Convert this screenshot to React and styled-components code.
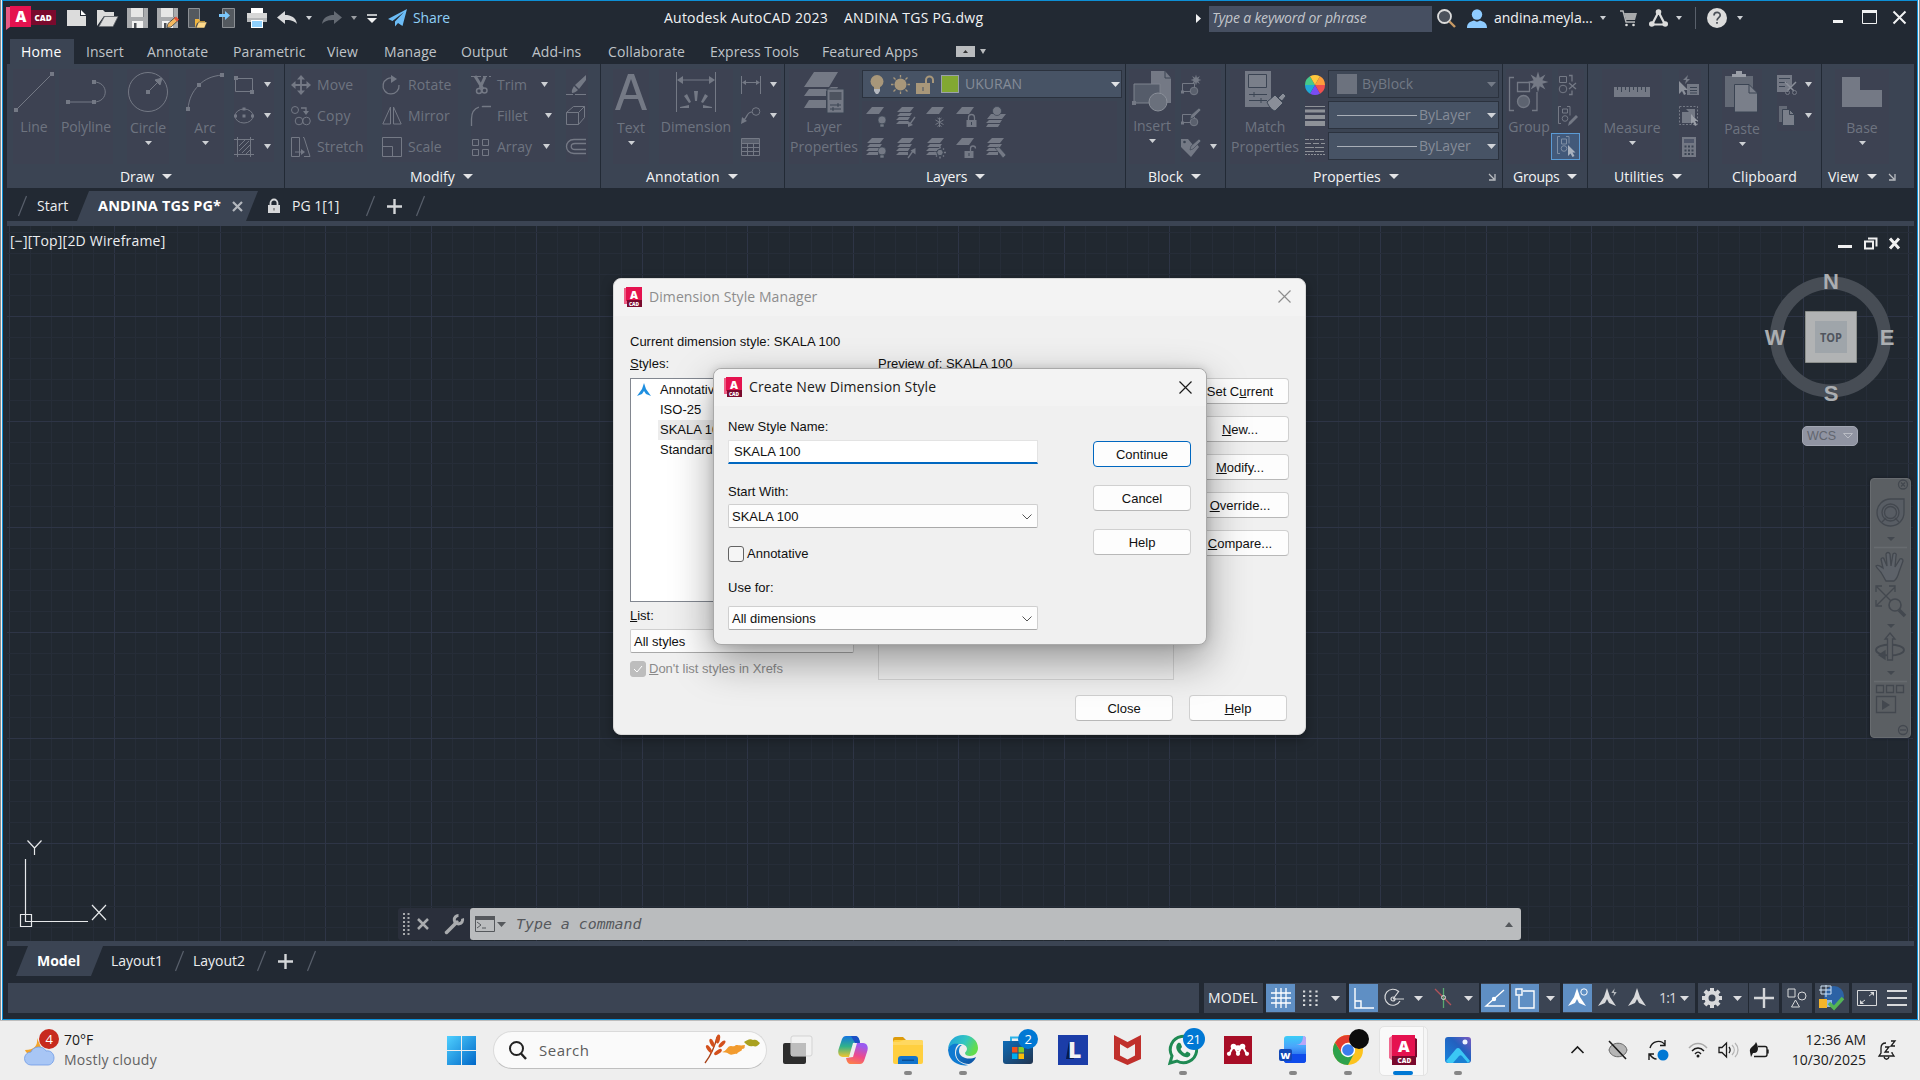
import React from "react";
import styled, { createGlobalStyle, css } from "styled-components";

const UI = `"Open Sans", "Noto Sans", sans-serif`;
const ARIAL = `"Liberation Sans", Arial, sans-serif`;
const c = {
  frame: "#222933",
  panel: "#3b4453",
  canvas: "#212830",
  blue: "#0d8fd6",
  dim: "#6e7480",
  icon: "#747985",
  light: "#d8d9db",
  active: "#5f8fc4",
};

const Global = createGlobalStyle`
  * { box-sizing: border-box; }
  body { margin: 0; width: 1920px; height: 1080px; overflow: hidden; background: ${c.frame}; font: 14px/20px ${UI}; }
  svg { display: block; flex: none; overflow: visible; }
`;

const Svg = ({ w, h, sw = 1, color, children }) => (
  <svg width={w} height={h} viewBox={`0 0 ${w} ${h}`} fill="none" stroke="currentColor" strokeWidth={sw} color={color}>
    {children}
  </svg>
);

/* ---------- primitives ---------- */
const Shell = styled.div`
  width: 1920px; height: 1020px; padding: 0 1px; background: #f0f2f4;
  border-left: 1px solid #85898d; border-right: 1px solid #85898d;
`;
const Frame = styled.div`
  height: 1020px; border: 1px solid ${c.blue}; background: ${c.frame};
  display: flex; flex-direction: column;
`;
const Slot = styled.div`
  flex: none; display: flex; align-items: center; white-space: nowrap;
  margin-left: ${(p) => p.$l || 0}px; width: ${(p) => (p.$w ? p.$w + "px" : "auto")};
`;
const Txt = styled.span`
  flex: none; white-space: pre; letter-spacing: ${(p) => p.$ls || 0}px;
  color: ${(p) => p.$c || "inherit"}; font-size: ${(p) => p.$s || 14}px;
  font-weight: ${(p) => (p.$b ? 700 : 400)};
  width: ${(p) => (p.$w ? p.$w + "px" : "auto")}; margin-left: ${(p) => p.$l || 0}px;
`;
const Caret = ({ w = 8, h = 5, color = "#cdd0d4" }) => (
  <Svg w={w} h={h} color={color}><path d={`M0 0H${w}L${w / 2} ${h}Z`} fill="currentColor" stroke="none" /></Svg>
);

/* ---------- title bar ---------- */
const TitleBar = styled.div`
  height: 38px; padding: 0 0 4px 3px; display: flex; align-items: center; color: #f1f2f3;
  & span { position: relative; top: -0.5px; }
`;
const SearchBox = styled.div`
  width: 223px; height: 26px; margin-left: 7px; padding-left: 3px; background: #464f61;
  color: #c3c6cb; font-style: italic; display: flex; align-items: center; flex: none; margin-top: 1px;
`;
const Sep = styled.div`width: 1px; height: 22px; margin-left: 13px; background: #59606b;`;

const Logo = () => (
  <Svg w={50} h={24}>
    <g stroke="none">
      <path d="M0 1h8v17l-8 6z" fill="#e85a84" />
      <path d="M25 4h25v15H25z" fill="#7a0a2d" />
      <path d="M4 0h21v21H4z" fill="#e5124f" />
      <text x="9.5" y="16" fontFamily={UI} fontWeight="800" fontSize="15" fill="#fff">A</text>
      <text x="28.5" y="15" fontFamily={UI} fontWeight="800" fontSize="8.2" fill="#fff">CAD</text>
    </g>
  </Svg>
);
const F = "#dcdcdc";
const NewIco = () => <Svg w={22} h={18}><path d="M1 1h13v6h6v10H1z" fill={F} stroke="none" /><path d="M15 1l5 5h-5z" fill="#fff" stroke="none" /></Svg>;
const OpenIco = () => <Svg w={21} h={18}><path d="M0 17V1h6l2 2h9v4H7z" fill={F} stroke="none" /><path d="M2 17.500L7.500 7.500H21L16 17.500z" fill={F} stroke="#6b6e73" strokeWidth=".8" /></Svg>;
const Disk = () => (<g stroke="none"><path d="M0 0h4v9h13V0h4v20H0z" fill="#a9abae" /><path d="M4 0h12.500v9H4z" fill="#e6e6e6" /><path d="M5 13h11v7H5z" fill="#f2f2f2" /><path d="M7 15h2.500v5H7z" fill="#4c5056" /></g>);
const SaveIco = () => <Svg w={20} h={20}><Disk /></Svg>;
const SaveAsIco = () => <Svg w={20} h={20}><Disk /><path d="M10 19.500l1-4 7-6 3 3-7 6.500z" fill="#f4b860" stroke="#222933" strokeWidth=".7" /><path d="M17 10.500l2-2 3 3-2 2z" fill="#e8543a" stroke="none" /></Svg>;
const MobOpen = () => <Svg w={18} h={20}><path d="M.5.500h11v19H.5z" fill="#54595f" stroke="#8b8f94" /><path d="M7 20v-9h4l1 2h5v2H9z" fill="#f0b53f" stroke="none" /><path d="M8 20l2.500-6H19l-2.500 6z" fill="#ffd98a" stroke="#222933" strokeWidth=".5" /></Svg>;
const MobSave = () => <Svg w={16} h={20}><path d="M3.500.500h12v19h-12z" fill="#54595f" stroke="#8b8f94" /><path d="M0 6h6V3l5 4.500-5 4.500V9H0z" fill="#7cc7fb" stroke="none" /></Svg>;
const Printer = () => <Svg w={20} h={20}><g stroke="none"><path d="M4 0h12v5H4z" fill="#fff" /><path d="M0 5h20v9H0z" fill="#d7d7d7" /><path d="M0 10h20v4H0z" fill="#b5b7b9" /><path d="M4 12h12v8H4z" fill="#fff" /><path d="M5 13h10v6H5z" fill="#8ed0fc" /></g></Svg>;
const Undo = ({ dim }) => (
  <Svg w={20} h={14} color={dim ? "#646a73" : "#d8d9db"}>
    <path transform={dim ? "matrix(-1 0 0 1 20 0)" : undefined} d="M8 0v4c6 0 11 2.500 12 9-3-3.500-7-4-12-4v4L0 6.500z" fill="currentColor" stroke="none" />
  </Svg>
);
const Plane = () => <Svg w={19} h={18}><path d="M19 0L0 10l4.500 2L16 3 7 12.500v5l3-3.500 4.500 3z" fill="#6cbcf6" stroke="none" /></Svg>;
const Lens = () => <Svg w={19} h={19}><circle cx="7.500" cy="7.500" r="6.500" fill="#4c525c" stroke="#dcdcdc" strokeWidth="1.800" /><path d="M12.500 12.500l5.500 5.500" stroke="#c79a64" strokeWidth="2.400" /></Svg>;
const User = () => <Svg w={20} h={19}><g fill="#8ecbff" stroke="none"><circle cx="10" cy="5.500" r="5.200" /><path d="M0 19c0-5 3-6.500 7-7.500 2 1.500 4 1.500 6 0 4 1 7 2.500 7 7.500z" /></g></Svg>;
const Cart = () => <Svg w={17} h={17}><path d="M0 1h3l3 11h9" stroke="#b5b7b9" strokeWidth="1.400" /><path d="M4 3h13l-2 7H6z" fill="#a7a9ab" stroke="none" /><circle cx="6.500" cy="15" r="1.300" fill={F} stroke="none" /><circle cx="13.500" cy="15" r="1.300" fill={F} stroke="none" /></Svg>;
const AppTri = () => <Svg w={19} h={18}><path d="M9.500 3L3 15.500h13z" stroke={F} strokeWidth="2.200" /><g fill={F} stroke="none"><circle cx="9.500" cy="3" r="2.800" /><circle cx="2.800" cy="15" r="2.800" /><circle cx="16.200" cy="15" r="2.800" /></g></Svg>;
const Help = () => <Svg w={20} h={20}><circle cx="10" cy="10" r="10" fill="#dcdcdc" stroke="none" /><path d="M7 7.500c0-4 6.200-4 6.200-.3 0 2.300-3.200 2.600-3.200 5.300M10 14v1.800" stroke="#4a4f57" strokeWidth="1.700" /></Svg>;

const Title = () => (
  <TitleBar>
    <Slot $w={50}><Logo /></Slot>
    <Slot $l={10} $w={22}><NewIco /></Slot>
    <Slot $l={9} $w={21}><OpenIco /></Slot>
    <Slot $l={9} $w={20}><SaveIco /></Slot>
    <Slot $l={10} $w={20}><SaveAsIco /></Slot>
    <Slot $l={11} $w={18}><MobOpen /></Slot>
    <Slot $l={13} $w={16}><MobSave /></Slot>
    <Slot $l={12} $w={20}><Printer /></Slot>
    <Slot $l={10} $w={20}><Undo /></Slot>
    <Slot $l={9} $w={6}><Caret w={6} h={4} /></Slot>
    <Slot $l={10} $w={20}><Undo dim /></Slot>
    <Slot $l={9} $w={6}><Caret w={6} h={4} color="#9a9da2" /></Slot>
    <Slot $l={10} $w={10}><Svg w={10} h={9}><path d="M0 1h10" strokeWidth="1.500" /><path d="M0 4h10L5 9z" fill="currentColor" stroke="none" /></Svg></Slot>
    <Slot $l={11} $w={19}><Plane /></Slot>
    <Slot $l={6} $w={251}><Txt $c="#8fd0f8" $ls={-0.1}>Share</Txt></Slot>
    <Slot $w={165}><Txt $ls={0.22}>Autodesk AutoCAD 2023</Txt></Slot>
    <Slot $l={15} $w={150}><Txt $ls={0.25}>ANDINA TGS PG.dwg</Txt></Slot>
    <Slot $l={202} $w={6}><Svg w={5} h={9}><path d="M0 0l5 4.500L0 9z" fill="currentColor" stroke="none" /></Svg></Slot>
    <SearchBox><Txt $ls={-0.18}>Type a keyword or phrase</Txt></SearchBox>
    <Slot $l={5} $w={19}><Lens /></Slot>
    <Slot $l={11} $w={20}><User /></Slot>
    <Slot $l={7} $w={100}><Txt>andina.meyla...</Txt></Slot>
    <Slot $l={6} $w={6}><Caret w={6} h={4} /></Slot>
    <Slot $l={14} $w={17}><Cart /></Slot>
    <Slot $l={12} $w={19}><AppTri /></Slot>
    <Slot $l={8} $w={6}><Caret w={6} h={4} /></Slot>
    <Sep />
    <Slot $l={11} $w={20}><Help /></Slot>
    <Slot $l={10} $w={6}><Caret w={6} h={4} /></Slot>
    <Slot $l={90} $w={10}><Svg w={10} h={10}><path d="M0 8.500h10" strokeWidth="3" /></Svg></Slot>
    <Slot $l={19} $w={15}><Svg w={15} h={16}><path d="M.5 1v12.500h14V1" /><path d="M0 1.500h15" strokeWidth="3" /></Svg></Slot>
    <Slot $l={16} $w={13}><Svg w={13} h={14} sw={2}><path d="M.5.500l12 12M12.500.500l-12 12" /></Svg></Slot>
  </TitleBar>
);

/* ---------- ribbon tabs ---------- */
const TabRow = styled.div`height: 25px; display: flex; align-items: center; padding-left: 7px;`;
const Tab = styled.div`
  width: ${(p) => p.$w}px; height: 25px; padding: 3px 0 0 ${(p) => (p.$on ? 11 : 0)}px; flex: none; white-space: nowrap;
  margin-right: ${(p) => (p.$on ? 12 : 0)}px; background: ${(p) => (p.$on ? c.panel : "none")}; color: ${(p) => (p.$on ? "#fff" : "#bfc3c8")};
  letter-spacing: ${(p) => p.$ls || 0}px;
`;
const TABS = [["Home", 64, 0.3], ["Insert", 61, 0], ["Annotate", 86, 0.15], ["Parametric", 94, 0.1], ["View", 57, 0.1], ["Manage", 77, 0.1], ["Output", 71, 0], ["Add-ins", 76, 0], ["Collaborate", 102, 0.15], ["Express Tools", 112, 0], ["Featured Apps", 134, 0.08]];

/* ---------- ribbon ---------- */
const Ribbon = styled.div`height: 124px; margin: 0 3px 0 4px; background: ${c.panel}; display: flex;`;
const Panel = styled.section`
  width: ${(p) => p.$w}px; flex: none; display: flex; flex-direction: column;
  border-right: ${(p) => (p.$last ? 0 : 1)}px solid #222a35; color: ${c.dim};
`;
const Body = styled.div`height: 102px; display: flex; padding-top: 5px;`;
const Foot = styled.div`
  height: 22px; display: flex; align-items: center; color: #f3f4f5; padding-left: ${(p) => p.$l}px; gap: 8px; padding-bottom: 1px; white-space: nowrap;
`;
const Big = styled.div`
  width: ${(p) => p.$w}px; margin-left: ${(p) => p.$l || 0}px; flex: none; height: 95px;
  display: flex; flex-direction: column; align-items: center; background: #3d4252;
`;
const BigIcon = styled.div`height: 46px; display: flex; align-items: center; color: ${c.icon};`;
const BigLabel = styled.div`
  line-height: 20px; white-space: nowrap; text-align: center; margin-bottom: 3px; margin-top: ${(p) => p.$t || 2}px;
  letter-spacing: ${(p) => p.$ls || 0}px;
`;
const Col = styled.div`width: ${(p) => p.$w}px; margin-left: ${(p) => p.$l || 0}px; flex: none; display: flex; flex-direction: column; padding-top: ${(p) => p.$t || 0}px;`;
const Row = styled.div`height: 31px; display: flex; align-items: center; white-space: nowrap; background: #3d4252; color: ${c.dim};`;
const IconCell = styled.div`width: 20px; flex: none; color: ${c.icon}; display: flex;`;

const Panels = ({ title, foot, w, last, launcher, noCaret, ls, children }) => (
  <Panel $w={w} $last={last}>
    <Body>{children}</Body>
    <Foot $l={foot}>
      <Txt $ls={ls}>{title}</Txt>
      {!noCaret && <Caret w={10} h={5} color="#e3e4e6" />}
      {launcher !== undefined && <Slot $l={launcher}><Svg w={8} h={8} color="#b9bcc1"><path d="M1 1l5 5M7 1v6H1" strokeWidth="1.300" /></Svg></Slot>}
    </Foot>
  </Panel>
);
const BigBtn = ({ w, l, icon, label, caret, t, ls }) => (
  <Big $w={w} $l={l}><BigIcon>{icon}</BigIcon><BigLabel $t={t} $ls={ls}>{label}</BigLabel>{caret && <Caret w={7} h={4} />}</Big>
);
const Sm = ({ icon, text, tw, caretAt, ls }) => (
  <Row>
    <IconCell>{icon}</IconCell>
    {text && <Txt $l={6} $w={tw} $ls={ls}>{text}</Txt>}
    {caretAt !== undefined && <Slot $l={caretAt}><Caret w={7} h={5} /></Slot>}
  </Row>
);
const sq = (x, y, s = 4) => <rect x={x - s / 2} y={y - s / 2} width={s} height={s} fill="currentColor" stroke="none" />;

const LineI = <Svg w={40} h={40}>{sq(2, 38)}{sq(38, 2)}<path d="M2 38L38 2" /></Svg>;
const PolyI = <Svg w={40} h={24}>{sq(2, 22)}{sq(28, 22)}{sq(28, 2)}<path d="M2 22h26c15 0 15-20 0-20" /></Svg>;
const CircI = <Svg w={40} h={40}><circle cx="20" cy="20" r="19.500" />{sq(20, 20)}<path d="M20 20L32 8" /><path d="M34 6l-7 2 5 5z" fill="currentColor" /></Svg>;
const ArcI = <Svg w={38} h={38}>{sq(2, 36)}{sq(13, 12)}{sq(36, 2)}<path d="M2 36C3 26 6 19 13 12 19 6 26 3 36 2" /></Svg>;
const RectI = <Svg w={20} h={18}><path d="M1.500 2.500h17v13h-17z" />{sq(2, 2)}{sq(18, 16)}</Svg>;
const EllI = <Svg w={20} h={18}><ellipse cx="10" cy="9" rx="9" ry="7" />{sq(10, 9, 3)}{sq(1.500, 9, 3)}{sq(10, 2, 3)}{sq(18.500, 9, 3)}</Svg>;
const HatI = <Svg w={20} h={20}><path d="M0 2.500h20M0 17.500h20M3.500 0v20M16.500 0v20M5 9l6-6M5 14L15 4M8 16l8-8M12 17l4-4" /></Svg>;
const MoveI = <Svg w={20} h={20}><path d="M10 2v16M2 10h16" strokeWidth="1.800" /><g fill="currentColor" stroke="none"><path d="M10 0l4 4.500H6zM10 20l4-4.500H6zM0 10l4.500-4v8zM20 10l-4.500-4v8z" /></g></Svg>;
const CopyI = <Svg w={20} h={20}><circle cx="4" cy="4" r="3.500" /><path d="M10 2h5v4" strokeWidth="1.300" /><path d="M12 5h6l-3 4z" fill="currentColor" stroke="none" /><circle cx="8" cy="15" r="3.800" /><circle cx="15.500" cy="15" r="3.800" /></Svg>;
const StretchI = <Svg w={20} h={20}><path d="M.5.500h8v19h-8zM12 .5h1l6 19h-6M4 15h8" /><path d="M10 12l4 3-4 3z" fill="currentColor" stroke="none" /></Svg>;
const RotI = <Svg w={20} h={20}><path d="M12 3.500A8 8 0 1 0 17 10" strokeWidth="1.300" /><path d="M9 0l6 4-6 4z" fill="currentColor" stroke="none" /></Svg>;
const MirI = <Svg w={20} h={20}><path d="M8.500 1v17H.8zM11.500 1v17h7.700z" /></Svg>;
const ScaleI = <Svg w={20} h={20}><path d="M.5.500h19v19H.5zM.5 9.500h10v10" /></Svg>;
const TrimI = <Svg w={20} h={20}><path d="M0 1.500h20" strokeDasharray="4 2" /><path d="M4 1l8 13M14 2l-5 11" strokeWidth="3" /><circle cx="8" cy="16" r="2.500" strokeWidth="1.500" /><circle cx="13.500" cy="15.500" r="2.500" strokeWidth="1.500" /></Svg>;
const FillI = <Svg w={20} h={20}><path d="M.5 20v-7C.5 5 5 .5 12 .5h8" strokeWidth="1.300" strokeDasharray="22 3" /></Svg>;
const ArrI = <Svg w={18} h={18}><path d="M1.500 1.500h6v6h-6zM11.500 1.500h6v6h-6zM1.500 11.500h6v6h-6zM11.500 11.500h6v6h-6z" /></Svg>;
const EraI = <Svg w={20} h={20}><path d="M20 0L9 10l4 4 7-9zM8 11l4 4c-2 2-4 3-6 3 0-2-1-2 2-7z" fill="currentColor" stroke="none" /><path d="M0 19.500h7M9 19.500h11" /></Svg>;
const ExpI = <Svg w={20} h={20}><path d="M.5 6.500h12v12H.5zM.5 6.500l7-6h11l-6 6M18.500.500v11l-6 7M12.500 6.500l6-6" /></Svg>;
const OffI = <Svg w={20} h={16}><path d="M20 .5H8c-10 0-10 14 0 14h12M20 4.500H9c-5 0-5 6 0 6h11" strokeWidth="1.300" /></Svg>;
const TextI = <Svg w={32} h={36}><path d="M0 36L13 0h6l13 36h-5l-4-11H9L5 36zM10.500 21h11L16 5z" fill="currentColor" stroke="none" /></Svg>;
const DimI = <Svg w={40} h={40}><path d="M.5 0v40M39.500 0v40M2 8h36" /><g fill="currentColor" stroke="none"><path d="M1 8l6-4v8zM39 8l-6-4v8zM18 19h4l-1 10h-2zM8 24l3-2 4 8-2 1zM32 24l-3-2-4 8 2 1zM4 35l9-2v3H4zM36 35l-9-2v3h9z" /></g></Svg>;
const LinI = <Svg w={20} h={18}><path d="M.5 0v18M19.500 0v18M2 6.500h16" /><path d="M1 6.500l4-2.500v5zM19 6.500l-4-2.500v5z" fill="currentColor" stroke="none" /></Svg>;
const LeadI = <Svg w={20} h={18}><circle cx="15" cy="4.500" r="3.800" /><path d="M11 5c-5 0-4 4-8 8" strokeWidth="1.200" /><path d="M0 17l1-7 5 4z" fill="currentColor" stroke="none" /></Svg>;
const TabI = <Svg w={20} h={18}><path d="M.5.500h18v17H.5zM.5 5.500h18M.5 9.500h18M.5 13.500h18M6.500 5v12M12.500 5v12" /><path d="M1 1h17v4H1z" fill="currentColor" stroke="none" opacity=".5" /></Svg>;
const LayerI = (
  <Svg w={40} h={42}><g fill="currentColor" stroke="none">
    <path d="M10 1h24l-9 15H0zM27 16h7l-2 4H22v5H0l5-7h19zM0 37l5-8h17v8z" />
    <path d="M23 18h17v24H23z" stroke={c.panel} /><path d="M25.500 21h12v8h-12z" fill="#4d535f" /></g>
    <path d="M26 34h11M26 38h11M34 32v4M29 36v4" stroke={c.panel} />
  </Svg>
);
const Stack = ({ n = 4, children }) => (
  <Svg w={20} h={20}><g fill="currentColor" stroke="none">
    {n === 1 ? <path d="M6 0h12l-5 7H0z" /> : <path d="M6 0h12l-4 5H1zM4 6h12l-2 3H1zM3 10h11l-2 3H0zM3 14h9v3H0z" />}
  </g>{children}</Svg>
);
const bulb = <g stroke={c.panel} strokeWidth=".6" fill="currentColor"><circle cx="16" cy="13" r="4" /><path d="M14 17h4v3h-4z" /></g>;
const flake = <path d="M13.500 10.500v9.500M9.500 13l8 4.500M17.500 13l-8 4.500M11.500 11l2 1.500 2-1.500M11.500 19.500l2-1.500 2 1.500" strokeWidth="1" />;
const lockB = <g><path d="M12.500 13v-2.500a3 3 0 0 1 6 0V13" strokeWidth="1.300" /><path d="M10.500 13h10v7h-10z" fill="currentColor" stroke="none" /><path d="M15.500 15v3" stroke={c.panel} /></g>;
const lockO = <g><path d="M14.500 13v-2.500a2.500 2.500 0 0 1 5 0" strokeWidth="1.300" /><path d="M8.500 13h9v7h-9z" fill="currentColor" stroke="none" /><path d="M13 15v3" stroke={c.panel} /></g>;
const sunB = <g><circle cx="14" cy="14.500" r="3.200" fill="currentColor" stroke={c.panel} /><path d="M14 8.500v2M14 18.500v2M8 14.500h2M18 14.500h2M10 10.500l1 1M17 17.500l1 1M18 10.500l-1 1M11 17.500l-1 1" strokeWidth="1.500" /></g>;
const arrD = <g><path d="M19 10l-5 7" strokeWidth="1.300" /><path d="M12 20v-6l5 4z" fill="currentColor" stroke="none" /></g>;
const arrU = <g><path d="M12 20l5-7" strokeWidth="1.300" /><path d="M19.500 10v6.500l-5-4z" fill="currentColor" stroke="none" /></g>;
const hd = <g fill="currentColor" stroke={c.panel} strokeWidth=".7"><circle cx="11" cy="4" r="4.500" /></g>;
const erB = <path d="M9 10l4-1 7 8-3 3z" fill="currentColor" stroke={c.panel} strokeWidth=".6" />;

const LAYERS_A = [<Stack n={1}>{bulb}</Stack>, <Stack>{arrD}</Stack>, <Stack n={1}>{flake}</Stack>, <Stack n={1}>{lockB}</Stack>, <Svg w={20} h={20}><path d="M5 7h15l-4 5H1zM3 13h13l-2 3H0zM2 17h12l-2 3H0z" fill="currentColor" stroke="none" />{hd}</Svg>];
const LAYERS_B = [<Stack>{bulb}</Stack>, <Stack>{arrU}</Stack>, <Stack>{sunB}</Stack>, <Stack n={1}>{lockO}</Stack>, <Stack>{erB}</Stack>];

const InsertI = <Svg w={40} h={42}><path d="M19 0h14l6 7v25H19z" fill="#747985" stroke="none" /><path d="M33 0v7h6" stroke={c.panel} /><path d="M2 13h26v19H2z" fill="#555c6a" stroke="#7e838e" /><circle cx="26" cy="31" r="9" fill="#6a707c" stroke="#8a8f99" />{sq(2, 32)}</Svg>;
const blk = <g><path d="M1.500 8.500h12v8h-12z" /><circle cx="13" cy="16" r="3.800" fill="#5a606d" />{sq(1.500, 17, 3)}</g>;
const star = (x, y, r) => {
  const pts = Array.from({ length: 16 }, (_, i) => { const a = (i * Math.PI) / 8, q = i % 2 ? r * 0.45 : r; return `${x + q * Math.sin(a)},${y - q * Math.cos(a)}`; }).join(" ");
  return <polygon points={pts} fill="currentColor" stroke="none" />;
};
const pen = <path d="M9 13l1-4 8-7 2 2-8 8z" fill="currentColor" stroke={c.panel} strokeWidth=".6" />;
const BlkNew = <Svg w={20} h={20}>{blk}{star(15, 5, 5.500)}</Svg>;
const BlkEd = <Svg w={20} h={20}>{blk}{pen}</Svg>;
const TagI = <Svg w={20} h={20}><path d="M0 2h7l5 6 3-2 3 4-8 10L0 10z" fill="currentColor" stroke="none" /><circle cx="3.500" cy="5" r="1.300" fill={c.panel} stroke="none" />{pen}</Svg>;
const MatchI = <Svg w={40} h={42}><path d="M0 0h26v36H0z" fill="currentColor" stroke="none" /><path d="M3.500 3.500h18v13h-18z" stroke={c.panel} fill="#7a7f8a" /><path d="M4 23.500h18M4 29.500h18M9 21v5M16 27v5" stroke={c.panel} /><path d="M22 31l8-7 8 8-8 8c-3-1-6-4-8-9zM33 27l5-5 3 3-4 5z" fill="#8a8e98" stroke={c.panel} /></Svg>;
const wheelCols = ["#ff9d3c", "#f0504f", "#7a4df3", "#1fa9d6", "#46c98a", "#ffc83d"];
const Wheel = <Svg w={20} h={20}>{wheelCols.map((f, i) => { const a = (i * Math.PI) / 3 + 0.52, b = a + Math.PI / 3; return <path key={f} d={`M10 10L${10 + 10 * Math.sin(a)} ${10 - 10 * Math.cos(a)}A10 10 0 0 1 ${10 + 10 * Math.sin(b)} ${10 - 10 * Math.cos(b)}Z`} fill={f} stroke="none" />; })}</Svg>;
const Weights = <Svg w={20} h={20} color="#8e9298"><path d="M0 .5h20" /><path d="M0 5h20" strokeWidth="3" /><path d="M0 11h20" strokeWidth="4" /><path d="M0 17.500h20" strokeWidth="5" /></Svg>;
const Types = <Svg w={20} h={16} color="#8e9298"><path d="M0 .5h20" strokeDasharray="4 1" /><path d="M0 4.500h20" strokeDasharray="6 2" /><path d="M0 8.500h20M0 12.500h20" strokeDasharray="9 1" /><path d="M0 15.500h20" strokeDasharray="2 1" /></Svg>;
const GroupI = <Svg w={40} h={40}><path d="M5 5.500H.5v33H5M23 38.500h5V20M8.500 10.500h12v9h-12z" strokeWidth="1.300" /><circle cx="14.500" cy="29.500" r="6" fill="#5d6370" strokeWidth="1.300" />{star(29, 10, 10.500)}</Svg>;
const gset = <g><path d="M1.500 1.500h7v6h-7z" /><circle cx="5" cy="14" r="3.800" /></g>;
const Ungroup = <Svg w={20} h={20}>{gset}<path d="M11 .5h3v6M11 19.500h3v-4M11 8l7 6M18 8l-7 6" strokeWidth="1.300" /></Svg>;
const GrEdit = <Svg w={20} h={20}><path d="M3 .5H.5v17H3M9 .5h3v9M4.500 3h5v4h-5z" /><circle cx="7" cy="12.500" r="2.800" /><path d="M10 20l1-4 7-7 2 2-7 7z" fill="currentColor" stroke="none" /></Svg>;
const GrSel = <Svg w={20} h={20}><path d="M4 .5H1.500v17H4M10 .5h3v7M5.500 3h5v5h-5z" /><circle cx="8" cy="12.500" r="2.800" /><path d="M12 9v11l2.500-2.500 2 3.500 2-1-2-3.500h3z" fill="#a9b2bf" stroke="none" /></Svg>;
const Ruler = <Svg w={36} h={10}><path d="M0 0h36v10H0z" fill="currentColor" stroke="none" /><path d="M3.500 0v3M7.500 0v5M11.500 0v3M15.500 0v5M19.500 0v3M23.500 0v5M27.500 0v3M31.500 0v5" stroke={c.panel} /></Svg>;
const QSel = <Svg w={20} h={20}><path d="M8 9h12v11H8z" fill="currentColor" stroke="none" /><path d="M11 12.500h7M11 15.500h7M11 18h7" stroke={c.panel} /><path d="M0 6v13l3-3 2 4 2-1-2-4h4z" fill="#8b909a" stroke="none" /><path d="M9 0L4 5h3l-1 4 5-5H8z" fill="currentColor" stroke="none" /></Svg>;
const SelAll = <Svg w={20} h={20}><path d="M.5.500h18v18H.5z" strokeDasharray="2 1.500" /><path d="M3 6h11v11H3zM7 3h9v9" fill="currentColor" stroke="none" /><path d="M12 8v10l2-2 2 4 2-1-2-4h3z" fill="#9a9ea7" stroke="none" /></Svg>;
const Calc = <Svg w={20} h={20}><path d="M3 0h14v20H3z" fill="currentColor" stroke="none" /><path d="M5 2h10v4H5z" fill="#50576a" stroke="none" /><path d="M5.500 9.500h9M5.500 13.500h9M5.500 17h9" strokeDasharray="2 1.500" strokeWidth="2" stroke={c.panel} /></Svg>;
const PasteI = <Svg w={34} h={42}><path d="M0 5h28v31H0z" fill="#646a76" stroke="none" /><path d="M7 6V3h4V0h6v3h4v3z" fill="#9a9ea7" stroke="none" /><path d="M9.500 13.500H24l8.500 8.500v19h-23z" fill="#7a7f8a" stroke={c.panel} /><path d="M24 13.500V22h8.500" stroke={c.panel} /></Svg>;
const CutI = <Svg w={20} h={20}><path d="M0 0h15v10l-4 7H0z" fill="currentColor" stroke="none" /><path d="M2 3.500h11M2 7.500h8M2 11.500h6" stroke={c.panel} /><path d="M8 7l9 9M19 7l-9 9" strokeWidth="1.500" stroke="#8b909a" /><circle cx="10.500" cy="17.500" r="2" /><circle cx="17.500" cy="17.500" r="2" /></Svg>;
const CopyClip = <Svg w={20} h={20}><path d="M2 0h8v16H2z" fill="#646a76" stroke="none" /><path d="M5.500 3.500h7l5 5v11h-12z" fill="#7a7f8a" stroke={c.panel} /><path d="M12.500 3.500v5h5" stroke={c.panel} /></Svg>;
const BaseI = <Svg w={40} h={30}><path d="M0 0h18v13h22v17H0z" fill="currentColor" stroke="none" /></Svg>;

const Combo = styled.div`
  height: 28px; width: ${(p) => p.$w}px; flex: none; border: 1px solid #2b323e; background: ${(p) => (p.$off ? "#3e4756" : "#475365")};
  display: flex; align-items: center; color: ${(p) => (p.$off ? "#727985" : "#858c98")}; margin-bottom: 3px;
`;
const Swatch = styled.div`width: ${(p) => p.$s}px; height: ${(p) => p.$s}px; background: ${(p) => p.$c}; border: ${(p) => (p.$bd ? `1px solid ${p.$bd}` : 0)}; flex: none;`;
const Hair = styled.div`width: 80px; height: 1px; background: #a9afb8; margin-left: 8px; flex: none;`;
const IconRow = styled.div`height: 31px; display: flex; align-items: center; gap: 10px; padding-left: 4px; color: ${c.icon}; background: #3d4252; width: 255px; flex: none;`;
const Toggle = styled.div`width: 29px; height: 27px; margin: 0 0 1px -7px; border: 1px solid #5b9bd5; background: #42597a; color: #7f8ea3; display: flex; align-items: center; justify-content: center; flex: none;`;
const Gold = "#a8977a";

const RibbonBar = () => (
  <Ribbon>
    <Panels title="Draw" w={278} foot={113} ls={-0.1}>
      <BigBtn l={6} w={42} icon={LineI} label="Line" />
      <BigBtn l={4} w={54} icon={PolyI} label="Polyline" ls={-0.1} />
      <BigBtn l={14} w={42} icon={CircI} label="Circle" caret t={3} />
      <BigBtn l={17} w={38} icon={ArcI} label="Arc" caret t={3} />
      <Col $l={10} $w={40}><Sm icon={RectI} caretAt={10} /><Sm icon={EllI} caretAt={10} /><Sm icon={HatI} caretAt={10} /></Col>
    </Panels>
    <Panels title="Modify" w={316} foot={125}>
      <Col $l={6} $w={76}><Sm icon={MoveI} text="Move" ls={0.1} /><Sm icon={CopyI} text="Copy" ls={0.2} /><Sm icon={StretchI} text="Stretch" /></Col>
      <Col $l={15} $w={76}><Sm icon={RotI} text="Rotate" ls={0.15} /><Sm icon={MirI} text="Mirror" /><Sm icon={ScaleI} text="Scale" /></Col>
      <Col $l={13} $w={84}>
        <Sm icon={TrimI} text="Trim" tw={28} caretAt={16} /><Sm icon={FillI} text="Fillet" tw={33} caretAt={15} /><Sm icon={ArrI} text="Array" tw={35} caretAt={11} />
      </Col>
      <Col $l={11} $w={22}><Sm icon={EraI} /><Sm icon={ExpI} /><Sm icon={OffI} /></Col>
    </Panels>
    <Panels title="Annotation" w={184} foot={45} ls={0.1}>
      <BigBtn l={12} w={36} icon={TextI} label="Text" caret t={3} />
      <BigBtn l={10} w={74} icon={DimI} label="Dimension" />
      <Col $l={8} $w={40}><Sm icon={LinI} caretAt={9} /><Sm icon={LeadI} caretAt={9} /><Sm icon={TabI} /></Col>
    </Panels>
    <Panels title="Layers" w={341} foot={141} ls={-0.2}>
      <BigBtn l={4} w={70} icon={LayerI} label={<>Layer<br />Properties</>} />
      <Col $l={3} $w={260} $t={1}>
        <Combo $w={260}>
          <Slot $l={7} $w={14}><Svg w={14} h={19}><circle cx="7" cy="6.500" r="6.500" fill={Gold} stroke="none" /><path d="M4 12h6v2H4z" fill={Gold} stroke="none" /><path d="M4 14h6v2l-2 3H6l-2-3z" fill="#b4b8bf" stroke="none" /></Svg></Slot>
          <Slot $l={7} $w={19}><Svg w={19} h={19} color={Gold}><circle cx="9.500" cy="9.500" r="6" fill="currentColor" stroke="none" /><path d="M9.500 0v2.500M9.500 16.500V19M0 9.500h2.500M16.500 9.500H19M2.500 2.500l2 2M14.500 14.500l2 2M16.500 2.500l-2 2M4.500 14.500l-2 2" strokeWidth="1.300" /></Svg></Slot>
          <Slot $l={6} $w={18}><Svg w={18} h={19} color={Gold}><path d="M10 9V5a3.500 3.500 0 0 1 7 0v3" strokeWidth="2" /><path d="M0 8h14v11H0z" fill="currentColor" stroke="none" /><path d="M7 12v4" stroke="#475365" /></Svg></Slot>
          <Slot $l={7}><Swatch $s={18} $c="#82a832" $bd="#9aa1ab" /></Slot>
          <Txt $l={6} $w={146}>UKURAN</Txt>
          <Caret w={9} h={5} color="#e0e2e5" />
        </Combo>
        <IconRow>{LAYERS_A.map((n, i) => <React.Fragment key={i}>{n}</React.Fragment>)}</IconRow>
        <IconRow>{LAYERS_B.map((n, i) => <React.Fragment key={i}>{n}</React.Fragment>)}</IconRow>
      </Col>
    </Panels>
    <Panels title="Block" w={100} foot={22}>
      <BigBtn l={3} w={46} icon={InsertI} label="Insert" caret t={1} />
      <Col $l={6} $w={40}><Sm icon={BlkNew} /><Sm icon={BlkEd} /><Sm icon={TagI} caretAt={9} /></Col>
    </Panels>
    <Panels title="Properties" w={277} foot={87} launcher={81}>
      <BigBtn l={4} w={70} icon={MatchI} label={<>Match<br />Properties</>} />
      <Col $l={5} $w={23}><Sm icon={Wheel} /><Sm icon={Weights} /><Sm icon={Types} /></Col>
      <Col $w={171} $t={1}>
        <Combo $w={171} $off><Slot $l={8}><Swatch $s={20} $c="#6c727e" /></Slot><Txt $l={5} $w={125}>ByBlock</Txt><Caret w={9} h={5} color="#747b87" /></Combo>
        <Combo $w={171}><Hair /><Txt $l={2} $w={68}>ByLayer</Txt><Caret w={9} h={5} color="#d0d3d8" /></Combo>
        <Combo $w={171}><Hair /><Txt $l={2} $w={68}>ByLayer</Txt><Caret w={9} h={5} color="#d0d3d8" /></Combo>
      </Col>
    </Panels>
    <Panels title="Groups" w={85} foot={10} ls={-0.3}>
      <BigBtn l={3} w={46} icon={GroupI} label="Group" />
      <Col $l={6} $w={26}><Sm icon={Ungroup} /><Sm icon={GrEdit} /><Row><Toggle>{GrSel}</Toggle></Row></Col>
    </Panels>
    <Panels title="Utilities" w={121} foot={26} ls={0.1}>
      <BigBtn l={14} w={60} icon={Ruler} label="Measure" caret t={3} />
      <Col $l={17} $w={22}><Sm icon={QSel} /><Sm icon={SelAll} /><Sm icon={Calc} /></Col>
    </Panels>
    <Panels title="Clipboard" w={113} foot={23} noCaret ls={0.15}>
      <BigBtn l={13} w={40} icon={PasteI} label="Paste" caret t={4} />
      <Col $l={15} $w={38}><Sm icon={CutI} caretAt={8} /><Sm icon={CopyClip} caretAt={8} /></Col>
    </Panels>
    <Panels title="View" w={92} foot={6} last launcher={3}>
      <BigBtn l={13} w={54} icon={BaseI} label="Base" caret t={3} />
    </Panels>
  </Ribbon>
);

/* ---------- document tabs ---------- */
const DocTabs = styled.div`height: 33px; display: flex; align-items: center; color: #eceef0; padding: 3px 0 0 15px;`;
const LayoutTabs = styled(DocTabs)`height: 30px; padding: 0 0 0 13px;`;
const Active = styled.div`
  width: ${(p) => p.$w}px; height: 30px; padding-left: 21px; flex: none;
  background: ${c.panel}; clip-path: polygon(12px 0, 100% 0, calc(100% - 12px) 100%, 0 100%);
  display: flex; align-items: center; color: #fff; white-space: nowrap;
`;
const Band = styled.div`height: 5px; margin: 0 3px 0 4px; background: ${c.panel}; flex: none;`;
const Slash = () => <Svg w={9} h={20} color="#59606c"><path d="M.5 20L8.500 0" strokeWidth="1.200" /></Svg>;
const Plus = ({ s = 15, color = "#d4d6d9" }) => <Svg w={s} h={s} color={color}><path d={`M${s / 2} 0V${s}M0 ${s / 2}H${s}`} strokeWidth="2.400" /></Svg>;

/* ---------- drawing area ---------- */
const Canvas = styled.div`height: 715px; position: relative; margin: 0 3px 0 4px; background: ${c.canvas}; flex: none;`;
const At = styled.div`position: absolute; left: ${(p) => p.$x}px; top: ${(p) => p.$y}px;`;
const xs = Array.from({ length: 91 }, (_, i) => 1.5 + i * 21.106).filter((x) => x < 1907);
const Grid = () => {
  const ln = [];
  xs.forEach((x, i) => ln.push(<path key={"x" + i} d={`M${Math.round(x) + 0.5} 0V715`} stroke={i % 5 ? "#262d38" : "#2e3546"} />));
  for (let i = 0; i < 34; i++) {
    const y = 5.5 + i * 21.09;
    if (y < 715) ln.push(<path key={"y" + i} d={`M0 ${Math.round(y) + 0.5}H1906`} stroke={i % 5 === 4 ? "#2e3546" : "#262d38"} />);
  }
  return <Svg w={1906} h={715}>{ln}</Svg>;
};
const UcsIcon = () => (
  <Svg w={90} h={90} color="#e6e8ea">
    <path d="M1.500 74.500h11v12h-11zM6.500 19v62.500H69" strokeWidth="1.200" />
    <path d="M8.500.500L15.500 8l7-7.500M15.500 8v7M73 65l14 15M87 65L73 80" strokeWidth="1.200" />
  </Svg>
);
const compass = { fontFamily: ARIAL, fontWeight: 700, fontSize: 22, fill: "#abaeb1", textAnchor: "middle", stroke: "none" };
const ViewCube = () => (
  <Svg w={130} h={140}>
    <circle cx="64.500" cy="67" r="54" stroke="#474d55" strokeWidth="13" />
    <text {...compass} x="65" y="18.500">N</text><text {...compass} x="65" y="130.500">S</text>
    <text {...compass} x="9" y="75">W</text><text {...compass} x="121" y="75">E</text>
    <path d="M39.500 41.500h51v51h-51z" fill="#b1b3b4" stroke="#8c8f8c" />
    <path d="M49 51h32v32H49z" fill="#9fa5aa" stroke="none" />
    <text x="65" y="71.500" fontFamily={UI} fontWeight="700" fontSize="12" fill="#50555e" stroke="none" textAnchor="middle" textLength="22" lengthAdjust="spacingAndGlyphs">TOP</text>
  </Svg>
);
const Wcs = styled.div`width: 56px; height: 20px; border-radius: 5px; background: #9094a2; border: 1px solid #a2a6b2; color: #62666f; font: 12.5px/18px ${ARIAL}; padding-left: 4px; display: flex; align-items: center; gap: 7px;`;
const Nav = styled.div`width: 41px; height: 260px; border-radius: 4px; background: #5b5f63; border: 1px solid #686c70; box-shadow: 0 0 3px #15191f; color: #43484f;`;
const NavIcons = () => (
  <Svg w={39} h={258} sw={1.300}>
    <circle cx="32" cy="5.500" r="4.500" /><path d="M30 3.500l4 4M34 3.500l-4 4" />
    <path d="M33 20v13A13.500 13.500 0 1 1 19.500 20z" fill="#585d64" /><circle cx="19.500" cy="33.500" r="8.500" /><circle cx="19.500" cy="33.500" r="6" /><path d="M11 43l4-4M28 43l-4-4" />
    <g fill="currentColor" stroke="none"><path d="M16 58h8l-4 4zM16 145h8l-4 4zM16 192h8l-4 4z" /></g>
    <path d="M3 68.500h33M3 202.500h33" stroke="#676b6f" />
    <path d="M11 95c-2-4-5-5-6-8 2-2 4 0 7 2l-2-9c1-2 3-1 3 0l3 7-1-12c1-2 3-2 4 0l1 12 2-12c2-2 4 0 3 2l-1 11 5-8c1-1 3 0 3 2l-4 11c-1 4-2 7-5 9H15z" fill="#5d6269" />
    <path d="M6 108l18 18M24 108L6 126M5 113v-6h6M18 107h6v6M11 127H5v-6" />
    <circle cx="24" cy="126" r="6" fill="#5b5f63" strokeWidth="1.600" /><path d="M28 131l6 6" strokeWidth="3.500" />
    <ellipse cx="19" cy="171" rx="14" ry="5.500" strokeWidth="1.800" /><path d="M19 154l5 6h-2.500v21h-5v-21H14z" fill="#5b5f63" /><path d="M8 176l6-4v8z" fill="currentColor" />
    <path d="M5.500 206.500h7v7h-7zM15.500 206.500h7v7h-7zM25.500 206.500h7v7h-7zM5.500 217.500h19v16h-19z" /><path d="M11 221l8 5-8 5z" fill="currentColor" stroke="none" />
    <circle cx="32" cy="251" r="4.500" /><path d="M29 251h6" />
  </Svg>
);
const Cmd = styled.div`width: 1123px; height: 32px; display: flex; align-items: center; background: #2a2f3b; border-radius: 3px; color: #a9abae;`;
const CmdInput = styled.div`
  width: 1051px; height: 32px; margin-left: 6px; border-radius: 3px; background: #babcbe; display: flex; align-items: center; padding-left: 5px; color: #55585c;
  font: italic 14.9px/20px "DejaVu Sans Mono", monospace;
`;

/* ---------- dialogs ---------- */
const Dialog = styled.div`
  position: absolute; left: ${(p) => p.$x}px; top: ${(p) => p.$y}px; width: ${(p) => p.$w}px; height: ${(p) => p.$h}px;
  background: #f0f0f0; border-radius: 8px; border: 1px solid ${(p) => p.$bd}; font: 13px/16px ${ARIAL}; color: #101010; display: flex; flex-direction: column;
  box-shadow: ${(p) => p.$sh}; overflow: ${(p) => (p.$clip ? "hidden" : "visible")};
`;
const DlgHead = styled.div`height: 37px; flex: none; background: #f3f3f3; border-radius: 8px 8px 0 0; display: flex; align-items: center; padding: 0 0 ${(p) => p.$pb || 0}px 10px; font: 14px/20px ${UI}; color: ${(p) => p.$c};`;
const DlgTitle = styled.span`margin-left: 7px; flex: 1; letter-spacing: ${(p) => p.$ls}px;`;
const DlgIcon = () => (
  <Svg w={18} h={20}><g stroke="none">
    <path d="M0 1h6v16H0z" fill="#ef5f86" /><path d="M2 0h16v14H2z" fill="#e5124f" /><path d="M3 13h15v7H3z" fill="#7a0a2d" />
    <text x="6" y="12" fontFamily={UI} fontWeight="800" fontSize="11" fill="#fff">A</text>
    <text x="5" y="18.600" fontFamily={UI} fontWeight="800" fontSize="4.800" fill="#fff">CAD</text>
  </g></Svg>
);
const XIco = () => <Svg w={13} h={13}><path d="M.5.500l12 12M12.500.500l-12 12" strokeWidth="1.200" /></Svg>;
const Button = styled.div`
  width: 98px; height: 26px; border: 1px solid ${(p) => (p.$primary ? "#0067c0" : "#d0d0d0")}; border-bottom-color: ${(p) => (p.$primary ? "#0067c0" : "#b8b8b8")};
  border-radius: 4px; background: #fdfdfd; display: flex; align-items: center; justify-content: center; white-space: pre; flex: none; padding-top: 1px;
`;
const Select = styled.div`
  width: ${(p) => p.$w}px; height: 24px; border: 1px solid #cfcfcf; border-bottom-color: #a9a9a9; border-radius: 2px; background: #fdfdfd;
  padding: 1px 5px 0 3px; display: flex; align-items: center; justify-content: space-between; flex: none;
`;
const Input = styled.div`width: 310px; height: 24px; background: #fff; border: 1px solid #e3e3e3; border-bottom: 2px solid #0067c0; padding-left: 5px; display: flex; align-items: center; flex: none;`;
const Chev = () => <Svg w={10} h={6}><path d="M.5.500L5 5l4.500-4.500" stroke="#555" /></Svg>;
const Check = styled.div`
  width: 16px; height: 16px; border-radius: 3px; border: 1px solid ${(p) => (p.$on ? "#bdbdbd" : "#636363")}; background: ${(p) => (p.$on ? "#bdbdbd" : "#f5f5f5")};
  display: flex; align-items: center; justify-content: center; flex: none;
`;
const Line = styled.div`height: ${(p) => p.$h}px; margin-top: ${(p) => p.$t || 0}px; display: flex; align-items: center; gap: ${(p) => p.$g || 0}px; color: ${(p) => p.$c || "inherit"}; white-space: pre; flex: none; letter-spacing: ${(p) => p.$ls || 0}px;`;
const DlgBody = styled.div`display: flex; flex: 1; padding-left: ${(p) => p.$l}px;`;
const V = styled.div`width: ${(p) => p.$w}px; display: flex; flex-direction: column; flex: none; margin-left: ${(p) => p.$l || 0}px; padding-top: ${(p) => p.$t || 0}px; gap: ${(p) => p.$g || 0}px;`;
const ListBox = styled.div`width: 224px; height: 224px; margin-top: 5px; background: #fff; border: 1px solid #828790; padding-top: 1px; flex: none;`;
const ListItem = styled.div`
  height: 20px; display: flex; align-items: center; padding-left: 6px;
  & > b { width: 17px; margin-right: 4px; display: flex; }
  & > span { flex: 1; height: 20px; line-height: 20px; padding-left: 2px; background: ${(p) => (p.$sel ? "#ececec" : "none")}; }
`;
const PreviewBox = styled.div`width: 296px; height: 302px; margin-top: 5px; border: 1px solid #d4d4d4; flex: none;`;
const Buttons = styled.div`display: flex; gap: 16px; padding-left: 197px; margin-top: 15px;`;

const Manager = () => (
  <Dialog $x={606} $y={52} $w={693} $h={457} $bd="#d8d8d8" $sh="0 4px 12px rgba(0,0,0,.35)" $clip>
    <DlgHead $c="#8d8d8d" $pb={2}><DlgIcon /><DlgTitle $ls={0.08}>Dimension Style Manager</DlgTitle><Slot $w={27}><XIco /></Slot></DlgHead>
    <DlgBody $l={16}>
      <V $w={248} $t={17}>
        <Line $h={18}>Current dimension style: SKALA 100</Line>
        <Line $h={18} $t={4}><u>S</u>tyles:</Line>
        <ListBox>
          <ListItem><b><Svg w={14} h={14} color="#1f8fe0"><path d="M7 0l2 6 5 7-5-2-2-3-2 3-5 2 5-7z" fill="currentColor" stroke="none" /></Svg></b><span>Annotative</span></ListItem>
          <ListItem><b /><span>ISO-25</span></ListItem>
          <ListItem $sel><b /><span>SKALA 100</span></ListItem>
          <ListItem><b /><span>Standard</span></ListItem>
        </ListBox>
        <Line $h={18} $t={5}><u>L</u>ist:</Line>
        <Line $h={24} $t={4}><Select $w={224}>All styles<Chev /></Select></Line>
        <Line $h={18} $t={7} $g={3} $c="#8a8a8a"><Check $on><Svg w={10} h={8}><path d="M1 4l3 3 5-6" stroke="#fff" /></Svg></Check><span><u>D</u>on't list styles in Xrefs</span></Line>
      </V>
      <V $w={296} $t={39}>
        <Line $h={18}>Preview of: SKALA 100</Line>
        <PreviewBox />
        <Buttons><Button>Close</Button><Button><u>H</u>elp</Button></Buttons>
      </V>
      <V $w={98} $l={17} $t={62} $g={12}>
        <Button>Set C<u>u</u>rrent</Button><Button><u>N</u>ew...</Button><Button><u>M</u>odify...</Button><Button><u>O</u>verride...</Button><Button><u>C</u>ompare...</Button>
      </V>
    </DlgBody>
    <Dialog $x={99} $y={89} $w={494} $h={277} $bd="#a9a9a9" $sh="0 16px 42px rgba(0,0,0,.38), 0 0 8px rgba(0,0,0,.15)">
      <DlgHead $c="#1a1a1a" $pb={1}><DlgIcon /><DlgTitle $ls={0.1}>Create New Dimension Style</DlgTitle><Slot $w={27}><XIco /></Slot></DlgHead>
      <DlgBody $l={14}>
        <V $w={310} $t={12}>
          <Line $h={18}>New Style Name:</Line>
          <Line $h={24} $t={4}><Input>SKALA 100</Input></Line>
          <Line $h={18} $t={19}>Start With:</Line>
          <Line $h={24} $t={3}><Select $w={310}>SKALA 100<Chev /></Select></Line>
          <Line $h={18} $t={17} $g={3}><Check />Annotative</Line>
          <Line $h={18} $t={16}>Use for:</Line>
          <Line $h={24} $t={9}><Select $w={310}>All dimensions<Chev /></Select></Line>
        </V>
        <V $w={98} $l={55} $t={35} $g={18}><Button $primary>Continue</Button><Button>Cancel</Button><Button>Help</Button></V>
      </DlgBody>
    </Dialog>
  </Dialog>
);

/* ---------- status bar ---------- */
const Status = styled.div`height: 30px; margin: 7px 3px 6px 5px; display: flex; flex: none;`;
const Seg = styled.div`height: 30px; width: ${(p) => p.$w}px; margin-left: ${(p) => p.$l || 0}px; background: ${c.panel}; display: flex; align-items: center; color: ${c.light}; flex: none;`;
const On = styled.div`width: ${(p) => p.$w || 29}px; height: 28px; margin-left: ${(p) => p.$l || 0}px; background: ${c.active}; color: #fff; display: flex; align-items: center; justify-content: center; flex: none;`;
const Dn = ({ l }) => <Slot $l={l}><Caret w={9} h={5} color="#dcdde0" /></Slot>;
const anno = <path d="M9 0l3 9 6 9-7-3-2-4-2 4-7 3 6-9z" fill="currentColor" stroke="none" />;
const gear = Array.from({ length: 8 }, (_, i) => <path key={i} transform={`rotate(${i * 45} 10 10)`} d="M8 0h4v5H8z" fill="currentColor" stroke="none" />);
const StatusBar = () => (
  <Status>
    <Seg $w={1191} />
    <Seg $l={5} $w={59}><Txt $l={4} $c="#f2f3f4" $ls={0.2}>MODEL</Txt></Seg>
    <Seg $l={3} $w={80}>
      <On><Svg w={20} h={20} sw={1.300}><path d="M5 0v20M10 0v20M15 0v20M0 5h20M0 10h20M0 15h20" /></Svg></On>
      <Slot $l={8} $w={15}><Svg w={15} h={16}><path d="M0 1.500h15M0 6h15M0 10.500h15M0 15h15" strokeWidth="2.200" strokeDasharray="2.200 4" /></Svg></Slot>
      <Dn l={13} />
    </Seg>
    <Seg $l={3} $w={130}>
      <On><Svg w={20} h={21} sw={1.400}><path d="M1 0v20h19M1 13h6v7" /></Svg></On>
      <Slot $l={6} $w={20}><Svg w={20} h={18} sw={1.200}><path d="M14.500 2.500A8 8 0 1 0 16 12M9 10h11M9 10l6-8" /><circle cx="9" cy="10" r="2" /></Svg></Slot>
      <Dn l={10} />
      <Slot $l={12} $w={16}><Svg w={16} h={20}><path d="M0 1l16 16" stroke="#b2525a" strokeWidth="1.300" /><path d="M8.500 0v20" stroke="#59a870" strokeWidth="1.300" /><circle cx="8.500" cy="9.500" r="2" /></Svg></Slot>
      <Dn l={13} />
    </Seg>
    <Seg $l={2} $w={79}>
      <On $w={28}><Svg w={20} h={18} sw={1.400}><path d="M19 1L1 17h19" /><circle cx="9" cy="10" r="1.500" fill="#fff" /></Svg></On>
      <On $l={2} $w={28}><Svg w={20} h={20} sw={1.400}><path d="M8 3h11v17H4V8" /><path d="M1 1h6v6H1z" /></Svg></On>
      <Dn l={7} />
    </Seg>
    <Seg $l={3} $w={132}>
      <On><Svg w={20} h={20}>{anno}<circle cx="16" cy="4" r="3.200" /></Svg></On>
      <Slot $l={6} $w={20}><Svg w={20} h={20}>{anno}<path d="M17 0l-4 5h3l-1 4 4-5h-3z" fill="currentColor" stroke={c.panel} strokeWidth=".5" /></Svg></Slot>
      <Slot $l={10} $w={18}><Svg w={18} h={20}>{anno}</Svg></Slot>
      <Txt $l={13} $w={17} $ls={-0.8}>1:1</Txt>
      <Dn l={4} />
    </Seg>
    <Seg $l={3} $w={50}>
      <Slot $l={4} $w={20}><Svg w={20} h={20}>{gear}<circle cx="10" cy="10" r="5.500" strokeWidth="4" /></Svg></Slot>
      <Dn l={11} />
    </Seg>
    <Seg $l={1} $w={30}><Slot $l={5}><Plus s={20} /></Slot></Seg>
    <Seg $l={3} $w={30}><Slot $l={5}><Svg w={20} h={20}><path d="M1 1h7v8H1z" /><circle cx="15" cy="8" r="4" /><path d="M8.500 12l4 7h-8z" /></Svg></Slot></Seg>
    <Seg $l={3} $w={34}><Slot $l={4}><Svg w={25} h={26}>
      <circle cx="15" cy="11" r="10" fill="#2c62a5" stroke="none" /><path d="M7 0v12M0 5h12M2 1h10v8H2z" stroke="#cfe2f5" /><path d="M0 14h8v9H0z" fill="#f5b52a" stroke="none" /><path d="M8 15h5v7H8z" fill="#8fb7e0" stroke="none" />
      <path d="M10 18l5 5 9-10" stroke="#55b554" strokeWidth="3.500" />
    </Svg></Slot></Seg>
    <Seg $l={3} $w={60}>
      <Slot $l={5} $w={20}><Svg w={20} h={16}><path d="M.5.500h19v15H.5zM12 6l4-3M8 10l-4 3" /><path d="M17 2v4l-4-4zM3 14v-4l4 4z" fill="currentColor" stroke="none" /></Svg></Slot>
      <Slot $l={10} $w={20}><Svg w={20} h={16} sw={2}><path d="M0 1h20M0 8h20M0 15h20" /></Svg></Slot>
    </Seg>
  </Status>
);

/* ---------- taskbar ---------- */
const Taskbar = styled.div`height: 60px; border-top: 1px solid #bdbdbd; background: #eeeeee; display: flex; align-items: center; color: #1b1b1b; padding-bottom: 1px;`;
const Two = styled.div`display: flex; flex-direction: column; flex: none; width: ${(p) => p.$w}px; margin-left: ${(p) => p.$l}px; text-align: ${(p) => p.$a || "left"}; white-space: nowrap; padding-bottom: 1px;`;
const Pill = styled.div`width: 274px; height: 38px; border-radius: 19px; background: #fafafa; border: 1px solid #dadada; border-bottom-color: #bfbfbf; margin-left: 17px; display: flex; align-items: center; padding-left: 15px; flex: none;`;
const Cell = styled.div`
  width: 55px; height: 60px; display: flex; align-items: center; justify-content: center; position: relative; flex: none;
  ${(p) => p.$dot && css`&::after { content: ""; position: absolute; bottom: 5px; left: 23.500px; width: 8px; height: 4px; border-radius: 2px; background: #868686; }`}
  ${(p) => p.$cur && css`
    &::before { content: ""; position: absolute; left: 4px; top: 6px; width: 47px; height: 48px; border-radius: 5px; background: linear-gradient(90deg, #f9f9f9 0 43px, #e3e3e3 43px 44px, #f6f6f6 44px); border: 1px solid #e3e3e3; }
    &::after { content: ""; position: absolute; bottom: 5px; left: 17.500px; width: 20px; height: 4px; border-radius: 2px; background: #0078d4; }
    & > svg { position: relative; }
  `}
`;
const Badge = styled.div`
  position: absolute; left: ${(p) => p.$x}px; top: ${(p) => p.$y}px; width: ${(p) => p.$s || 20}px; height: ${(p) => p.$s || 20}px; border-radius: 50%;
  background: ${(p) => p.$c || "#0078d4"}; color: #fff; font: 13px/${(p) => p.$s || 20}px ${UI}; text-align: center; letter-spacing: -0.5px;
`;
const Weather = styled.div`width: 32px; height: 40px; margin-left: 24px; position: relative; flex: none; margin-top: -4px;`;

const WordIco = <Svg w={28} h={28}><g stroke="none"><defs><linearGradient id="wd" x1="0" y1="0" x2="0" y2="1"><stop offset="0" stopColor="#3ccdf7" /><stop offset=".4" stopColor="#4aa4fb" /><stop offset="1" stopColor="#0a46e4" /></linearGradient></defs><rect x="5" width="22" height="27" rx="3" fill="url(#wd)" /><path d="M24 0a3 3 0 0 1 3 3v6H17c4 0 7-3 7-9z" fill="#b9a6f7" /><path d="M5 18h22v6a3 3 0 0 1-3 3H8a3 3 0 0 1-3-3z" fill="#0f4bea" /><rect y="13" width="13" height="12" rx="2" fill="#1248b5" /><text x="1.500" y="22.500" fontFamily={UI} fontWeight="800" fontSize="9.500" fill="#fff">W</text></g></Svg>;
const ChromeIco = <Svg w={30} h={30}><g stroke="none"><circle cx="15" cy="15" r="15" fill="#fcc31e" /><path d="M2 7.500A15 15 0 0 0 15 30l6.100-11.500L15 22 9 18.500z" fill="#2da14c" /><path d="M2 7.500A15 15 0 0 1 28 7.500H15L9 18.500z" fill="#e33b2e" /><circle cx="15" cy="15" r="7.200" fill="#fff" /><circle cx="15" cy="15" r="5.800" fill="#3b7ded" /></g></Svg>;
const APPS = [
  { i: <Svg w={30} h={28}><rect y="7" width="23" height="21" rx="2" fill="#2d2d2d" stroke="none" /><rect x="8" width="21" height="20" rx="2" fill="#f2f2f2" fillOpacity=".9" stroke="#d3d3d3" /><path d="M8 7h15v13H8z" fill="#bdbdbd" stroke="none" /></Svg> },
  { i: <Svg w={30} h={28}><defs><linearGradient id="ca" x1="0" y1="0" x2="0" y2="1"><stop offset="0" stopColor="#1474e0" /><stop offset=".5" stopColor="#31b28a" /><stop offset="1" stopColor="#f2c52e" /></linearGradient><linearGradient id="cb" x1="0" y1="1" x2=".3" y2="0"><stop offset="0" stopColor="#ff8a3d" /><stop offset=".5" stopColor="#ee4a8c" /><stop offset="1" stopColor="#9a5af0" /></linearGradient></defs><g stroke="none"><path d="M8 0h9c3 0 4 2 5 6l-7 1-4 14H5c-4 0-6-4-4-9L4 3c1-2 2-3 4-3z" fill="url(#ca)" /><path d="M22 28h-9c-3 0-4-2-5-6l7-1 4-14h6c4 0 6 4 4 9l-3 9c-1 2-2 3-4 3z" fill="url(#cb)" /><path d="M13 0h4c3 0 4 2 5 7h-5z" fill="#1b4fc4" /></g></Svg> },
  { i: <Svg w={30} h={28}><g stroke="none"><path d="M0 3a2 2 0 0 1 2-2h8l3 3v6H0z" fill="#dd9b0a" /><rect y="4" width="30" height="24" rx="2" fill="#ffcf3f" /><path d="M0 6h6l5-2h17a2 2 0 0 1 2 2v3H0z" fill="#ffd860" /><path d="M5 28v-5a3 3 0 0 1 3-3h14a3 3 0 0 1 3 3v5z" fill="#1374cc" /><path d="M9 23.500h12v1.500H9z" fill="#0a4f96" /></g></Svg>, dot: 1 },
  { i: <Svg w={30} h={30}><defs><linearGradient id="ea" x1="0" y1="0" x2="1" y2=".4"><stop offset="0" stopColor="#1c9de0" /><stop offset=".6" stopColor="#34c7c0" /><stop offset="1" stopColor="#63dc4d" /></linearGradient><linearGradient id="eb" x1="0" y1="0" x2="1" y2="1"><stop offset="0" stopColor="#1787d9" /><stop offset="1" stopColor="#0c4e9e" /></linearGradient></defs><g stroke="none"><path d="M0 14C1 5 7 0 15 0c9 0 15 6 15 13 0 5-4 8-8 8-3 0-5-1-5-3 0-1 2-2 2-4 0-3-3-5-7-5C6 9 1 11 0 14z" fill="url(#ea)" /><path d="M0 15C1 9 7 8 11 9c-3 2-4 5-4 9 0 6 5 11 13 12-2 1-15 1-19-10z" fill="#0f7ad1" /><path d="M12 10c-3 2-4 5-4 8 0 7 6 11 13 11 3-1 6-4 7-7-8 4-17 0-17-6 0-3 1-5 3-6z" fill="url(#eb)" /></g></Svg>, dot: 1 },
  { i: <Svg w={30} h={30}><defs><linearGradient id="st" x1="0" y1="0" x2="1" y2="1"><stop offset="0" stopColor="#0d6cb8" /><stop offset="1" stopColor="#22344f" /></linearGradient></defs><path d="M8 6V2.500h14V6" stroke="#2fb4e8" strokeWidth="2" /><path d="M0 6h30v20a3 3 0 0 1-3 3H3a3 3 0 0 1-3-3z" fill="url(#st)" stroke="none" /><g stroke="none"><path d="M9 12h5.500v5.500H9z" fill="#f1511b" /><path d="M15.500 12H21v5.500h-5.500z" fill="#80cc28" /><path d="M9 18.500h5.500V24H9z" fill="#00adef" /><path d="M15.500 18.500H21V24h-5.500z" fill="#fbbc09" /></g></Svg>, b: <Badge $x={28} $y={9}>2</Badge> },
  { i: <Svg w={30} h={30}><path d="M0 0h30v30H0z" fill="#1b3da8" stroke="none" /><path d="M11 6l-3 18h8z" fill="#071c4d" stroke="none" /><text x="10" y="23" fontFamily={UI} fontWeight="800" fontSize="23" fill="#f2f2f2" stroke="none">L</text></Svg> },
  { i: <Svg w={27} h={30}><path d="M0 0l13.500 7L27 0v24l-13.500 6L0 24zM6 9v11.500l7.500 4 7.500-4V9l-7.500 4.500z" fill="#c0302c" fillRule="evenodd" stroke="none" /></Svg> },
  { i: <Svg w={30} h={30}><path d="M2 28l2-7A13.200 13.200 0 1 1 9 26z" fill="#f3f3f3" stroke="#1f8a53" strokeWidth="3" /><path d="M10 8c2-1 3 0 4 4l-1.500 2c1 2 2.500 3.500 4.500 4.500l2-2c3 1.500 4 2 3 4-2 3-6 2-10-1.500S7 11 10 8z" fill="#1f8a53" stroke="none" /></Svg>, dot: 1, b: <Badge $x={27.5} $y={8} $s={22}>21</Badge> },
  { i: <Svg w={28} h={28}><path d="M0 0h28v28H0z" fill="#a70d26" stroke="none" /><path d="M9.500 10.500h9M9 11l-3.500 6.500M19 11l3.500 6.500M10.500 11l3.500 6.500 3.500-6.500" stroke="#fff" strokeWidth="2" /><g fill="#fff" stroke="none"><circle cx="9.500" cy="10.500" r="2.800" /><circle cx="18.500" cy="10.500" r="2.800" /><circle cx="14" cy="12" r="2.400" /><circle cx="5" cy="17.800" r="2.100" /><circle cx="23" cy="17.800" r="2.100" /><circle cx="14" cy="17.800" r="2.100" /></g></Svg> },
  { i: WordIco, dot: 1 },
  { i: ChromeIco, dot: 1, b: <Badge $x={28.5} $y={9} $c="#0c0c0c" /> },
  { i: <Svg w={28} h={30}><g stroke="none"><path d="M0 3l4-3v26l-4-3z" fill="#f06a90" /><path d="M3 0h23v22H3z" fill="#e5124f" /><path d="M26 3l2 1v18l-2 1z" fill="#7a0a2d" /><path d="M3 21h24v9H3z" fill="#7a0a2d" /><text x="9" y="17" fontFamily={UI} fontWeight="800" fontSize="16" fill="#fff">A</text><text x="8.500" y="28" fontFamily={UI} fontWeight="800" fontSize="6.500" fill="#fff">CAD</text></g></Svg>, cur: 1 },
  { i: <Svg w={26} h={26}><defs><linearGradient id="ph" x1="0" y1="1" x2="1" y2="0"><stop offset="0" stopColor="#1684dc" /><stop offset=".6" stopColor="#2360bf" /><stop offset="1" stopColor="#7c5ac0" /></linearGradient></defs><rect width="26" height="26" rx="3" fill="url(#ph)" stroke="none" /><path d="M1 24l10-12c1-1.500 3-1.500 4 0l10 12-2 2H3z" fill="#3bc7f4" stroke="none" /><path d="M8 26l6-7c1-1 2-1 3 0l6 7z" fill="#1a7fd2" stroke="none" /><circle cx="20" cy="5" r="2.500" fill="#eef4ff" stroke="none" /></Svg>, dot: 1 },
];
const Leaves = () => (
  <Svg w={58} h={32}>
    <path d="M1 29C7 21 11 12 13 3" stroke="#a8431a" strokeWidth="1.300" />
    <g fill="#d3501c" stroke="none"><ellipse cx="14" cy="5" rx="2" ry="4.500" transform="rotate(12 14 5)" /><ellipse cx="8" cy="9" rx="1.900" ry="4.500" transform="rotate(-25 8 9)" /><ellipse cx="18" cy="10" rx="1.900" ry="4.500" transform="rotate(45 18 10)" /><ellipse cx="5" cy="15" rx="1.900" ry="4.500" transform="rotate(-35 5 15)" /><ellipse cx="14" cy="18" rx="1.900" ry="4.500" transform="rotate(55 14 18)" /></g>
    <path d="M18 18c5-1 5-6 9-6 2 0 3 1 5-1 3 0 4 1 9 0-1 3 1 3-3 4 0 3-4 2-5 5-3-1-5 2-8 0-2-2-4-1-7-2z" fill="#f29b2e" stroke="none" />
    <path d="M40 8c3-2 6-4 9-2 3-1 4 0 7 3-2 3-4 4-7 3-4 1-6-1-9-4z" fill="#a9a11f" stroke="none" />
  </Svg>
);
const TaskBar = () => (
  <Taskbar>
    <Weather>
      <Svg w={32} h={40}><path d="M13 10c1 8-3 12-12 12 2 6 12 8 18 2z" fill="#f3a32b" stroke="none" /><path d="M7 37a6 6 0 0 1 0-13c2-6 12-7 15-1 5-1 8 3 8 7 0 4-3 7-6 7z" fill="#a8c6f5" stroke="#6f9ae6" strokeWidth=".8" /></Svg>
      <Badge $x={15} $y={1} $c="#c72a1e">4</Badge>
    </Weather>
    <Two $l={8} $w={383}><Txt>70°F</Txt><Txt $c="#626262" $ls={0.25}>Mostly cloudy</Txt></Two>
    <Svg w={29} h={29}><defs><linearGradient id="wn" x1="0" y1="0" x2="1" y2="1"><stop offset="0" stopColor="#4fd0ff" /><stop offset="1" stopColor="#0067c8" /></linearGradient></defs><path d="M0 0h14v14H0zM15 0h14v14H15zM0 15h14v14H0zM15 15h14v14H15z" fill="url(#wn)" stroke="none" /></Svg>
    <Pill><Svg w={18} h={19} color="#222"><circle cx="7.500" cy="7.500" r="6.500" strokeWidth="2" /><path d="M12 12.500l5 5.500" strokeWidth="2.400" /></Svg><Txt $l={12} $w={165} $s={15} $c="#5c5c5c" $ls={0.5}>Search</Txt><Leaves /></Pill>
    <Slot $w={3} />
    {APPS.map((a, i) => <Cell key={i} $dot={a.dot} $cur={a.cur}>{a.i}{a.b}</Cell>)}
    <Slot $l={86} $w={13}><Svg w={13} h={8}><path d="M.5 7L6.500 1l6 6" strokeWidth="1.600" /></Svg></Slot>
    <Slot $l={24} $w={20}><Svg w={20} h={18}><path d="M1 9c2-9 16-9 18 0-2 9-16 9-18 0z" fill="#b5b5b5" stroke="#666" /><path d="M1 0l17 18" strokeWidth="1.600" /></Svg></Slot>
    <Slot $l={20} $w={21}><Svg w={21} h={21} sw={1.400}><path d="M2 8C4 1 13-1 17 5M17 0v5.500h-5M1 20v-6h5M1.500 14c2 3 4 5 7 5" /><circle cx="15" cy="15" r="5.500" fill="#0078d4" stroke="none" /></Svg></Slot>
    <Slot $l={19} $w={20}><Svg w={20} h={16} sw={1.400}><path d="M1 6c5-6 13-6 18 0" stroke="#aaa" /><path d="M4 9c3.500-4 8.500-4 12 0M7 12c2-2.500 4-2.500 6 0" /><circle cx="10" cy="14" r="1.500" fill="currentColor" stroke="none" /></Svg></Slot>
    <Slot $l={10} $w={20}><Svg w={20} h={16} sw={1.300}><path d="M1 5.500h3L8.500 1v14L4 10.500H1z" /><path d="M11 5c1.500 2 1.500 4 0 6" /><path d="M14 3c3 3 3 7 0 10M17 1c4 4 4 10 0 14" stroke="#b5b5b5" /></Svg></Slot>
    <Slot $l={11} $w={20}><Svg w={20} h={17} sw={1.400}><path d="M9 4.500h7a2 2 0 0 1 2 2v6a2 2 0 0 1-2 2H5M19 7.500v4" /><path d="M1 10c-1-5 4-5 6-10 3 5 3 12-3 11l-2 4z" fill="currentColor" stroke="none" /></Svg></Slot>
    <Two $l={5} $w={92} $a="right"><Txt $ls={-0.05}>12:36 AM</Txt><Txt>10/30/2025</Txt></Two>
    <Slot $l={12}><Svg w={18} h={20} sw={1.300}><path d="M8 3C5 3 3 5 3 8v5l-2 3h15l-2-3v-1M6 17c1 3 4 3 5 0" /><path d="M7 7h4l-4 5h4M13 1h4l-4 5h4" /></Svg></Slot>
  </Taskbar>
);

export default function App() {
  return (
    <>
      <Global />
      <Shell>
        <Frame>
          <Title />
          <TabRow>
            {TABS.map(([t, w, ls], i) => <Tab key={t} $w={w} $ls={ls} $on={i === 0}>{t}</Tab>)}
            <Slot $w={19}><Svg w={19} h={11}><path d="M0 0h19v11H0z" fill="#b9bbbe" stroke="none" /><path d="M7 7h5L9.500 4z" fill="#333" stroke="none" /></Svg></Slot>
            <Slot $l={5}><Caret w={6} h={5} color="#b9bbbe" /></Slot>
          </TabRow>
          <RibbonBar />
          <DocTabs>
            <Slash />
            <Txt $l={10} $w={40}>Start</Txt>
            <Active $w={181}>
              <Txt $b $w={134} $s={14.5} $ls={0.15}>ANDINA TGS PG*</Txt><Svg w={11} h={11} color="#b3b7bd"><path d="M1 1l9 9M10 1l-9 9" strokeWidth="2.200" /></Svg>
            </Active>
            <Slot $l={10} $w={12}><Svg w={12} h={14} color="#d6d7d9"><path d="M2.500 7V4a3.500 3.500 0 0 1 7 0v3" strokeWidth="1.800" /><path d="M0 6h12v8H0z" fill="currentColor" stroke="none" /><path d="M6 9v2.500" stroke="#555" /></Svg></Slot>
            <Txt $l={12} $w={74}>PG 1[1]</Txt>
            <Slash />
            <Slot $l={12} $w={29}><Plus /></Slot>
            <Slash />
          </DocTabs>
          <Band />
          <Canvas>
            <Grid />
            <At $x={3} $y={5}><Txt $c="#eceef0" $ls={0.2}>[−][Top][2D Wireframe]</Txt></At>
            <At $x={1831} $y={11}><Svg w={62} h={13} color="#f0f0f0"><path d="M0 9.500h14" strokeWidth="3" /><path d="M27 4.500h8v7h-8zM30 1.500h8.500v8" strokeWidth="2" /><path d="M52 1.500l9 10M61 1.500l-9 10" strokeWidth="3" /></Svg></At>
            <At $x={1759} $y={44}><ViewCube /></At>
            <At $x={1795} $y={200}><Wcs>WCS<Svg w={10} h={6}><path d="M.5.500h9L5 5z" stroke="#b9bcc4" /></Svg></Wcs></At>
            <At $x={1863} $y={252}><Nav><NavIcons /></Nav></At>
            <At $x={12} $y={614}><UcsIcon /></At>
            <At $x={391} $y={682}>
              <Cmd>
                <Slot $l={5} $w={7}><Svg w={7} h={22}><path d="M1 0v22M5.500 0v22" strokeWidth="2" strokeDasharray="2 2" /></Svg></Slot>
                <Slot $l={7} $w={12}><Svg w={12} h={12}><path d="M1 1l10 10M11 1L1 11" strokeWidth="2.500" /></Svg></Slot>
                <Slot $l={16} $w={19}><Svg w={20} h={20}><path d="M1.500 18.500L12 8" strokeWidth="3.500" strokeLinecap="round" /><path d="M17.500 4.500a4.200 4.200 0 1 1-4-3" strokeWidth="3" /></Svg></Slot>
                <CmdInput>
                  <Svg w={20} h={16}><path d="M.5.500h19v15H.5z" /><path d="M0 0h20v4H0z" fill="currentColor" stroke="none" /><path d="M2 6l4 3-4 3M7 12h4" /></Svg>
                  <Slot $l={2} $w={19}><Caret w={9} h={5} color="#55585c" /></Slot>
                  <Slot $w={125}>Type a command</Slot>
                  <Slot $l={864}><Svg w={8} h={5}><path d="M0 5h8L4 0z" fill="#55585c" stroke="none" /></Svg></Slot>
                </CmdInput>
              </Cmd>
            </At>
            <Manager />
          </Canvas>
          <Band />
          <LayoutTabs>
            <Active $w={87}><Txt $b>Model</Txt></Active>
            <Txt $l={8} $w={64}>Layout1</Txt>
            <Slash />
            <Txt $l={9} $w={64}>Layout2</Txt>
            <Slash />
            <Slot $l={12} $w={29}><Plus /></Slot>
            <Slash />
          </LayoutTabs>
          <StatusBar />
        </Frame>
      </Shell>
      <TaskBar />
    </>
  );
}
